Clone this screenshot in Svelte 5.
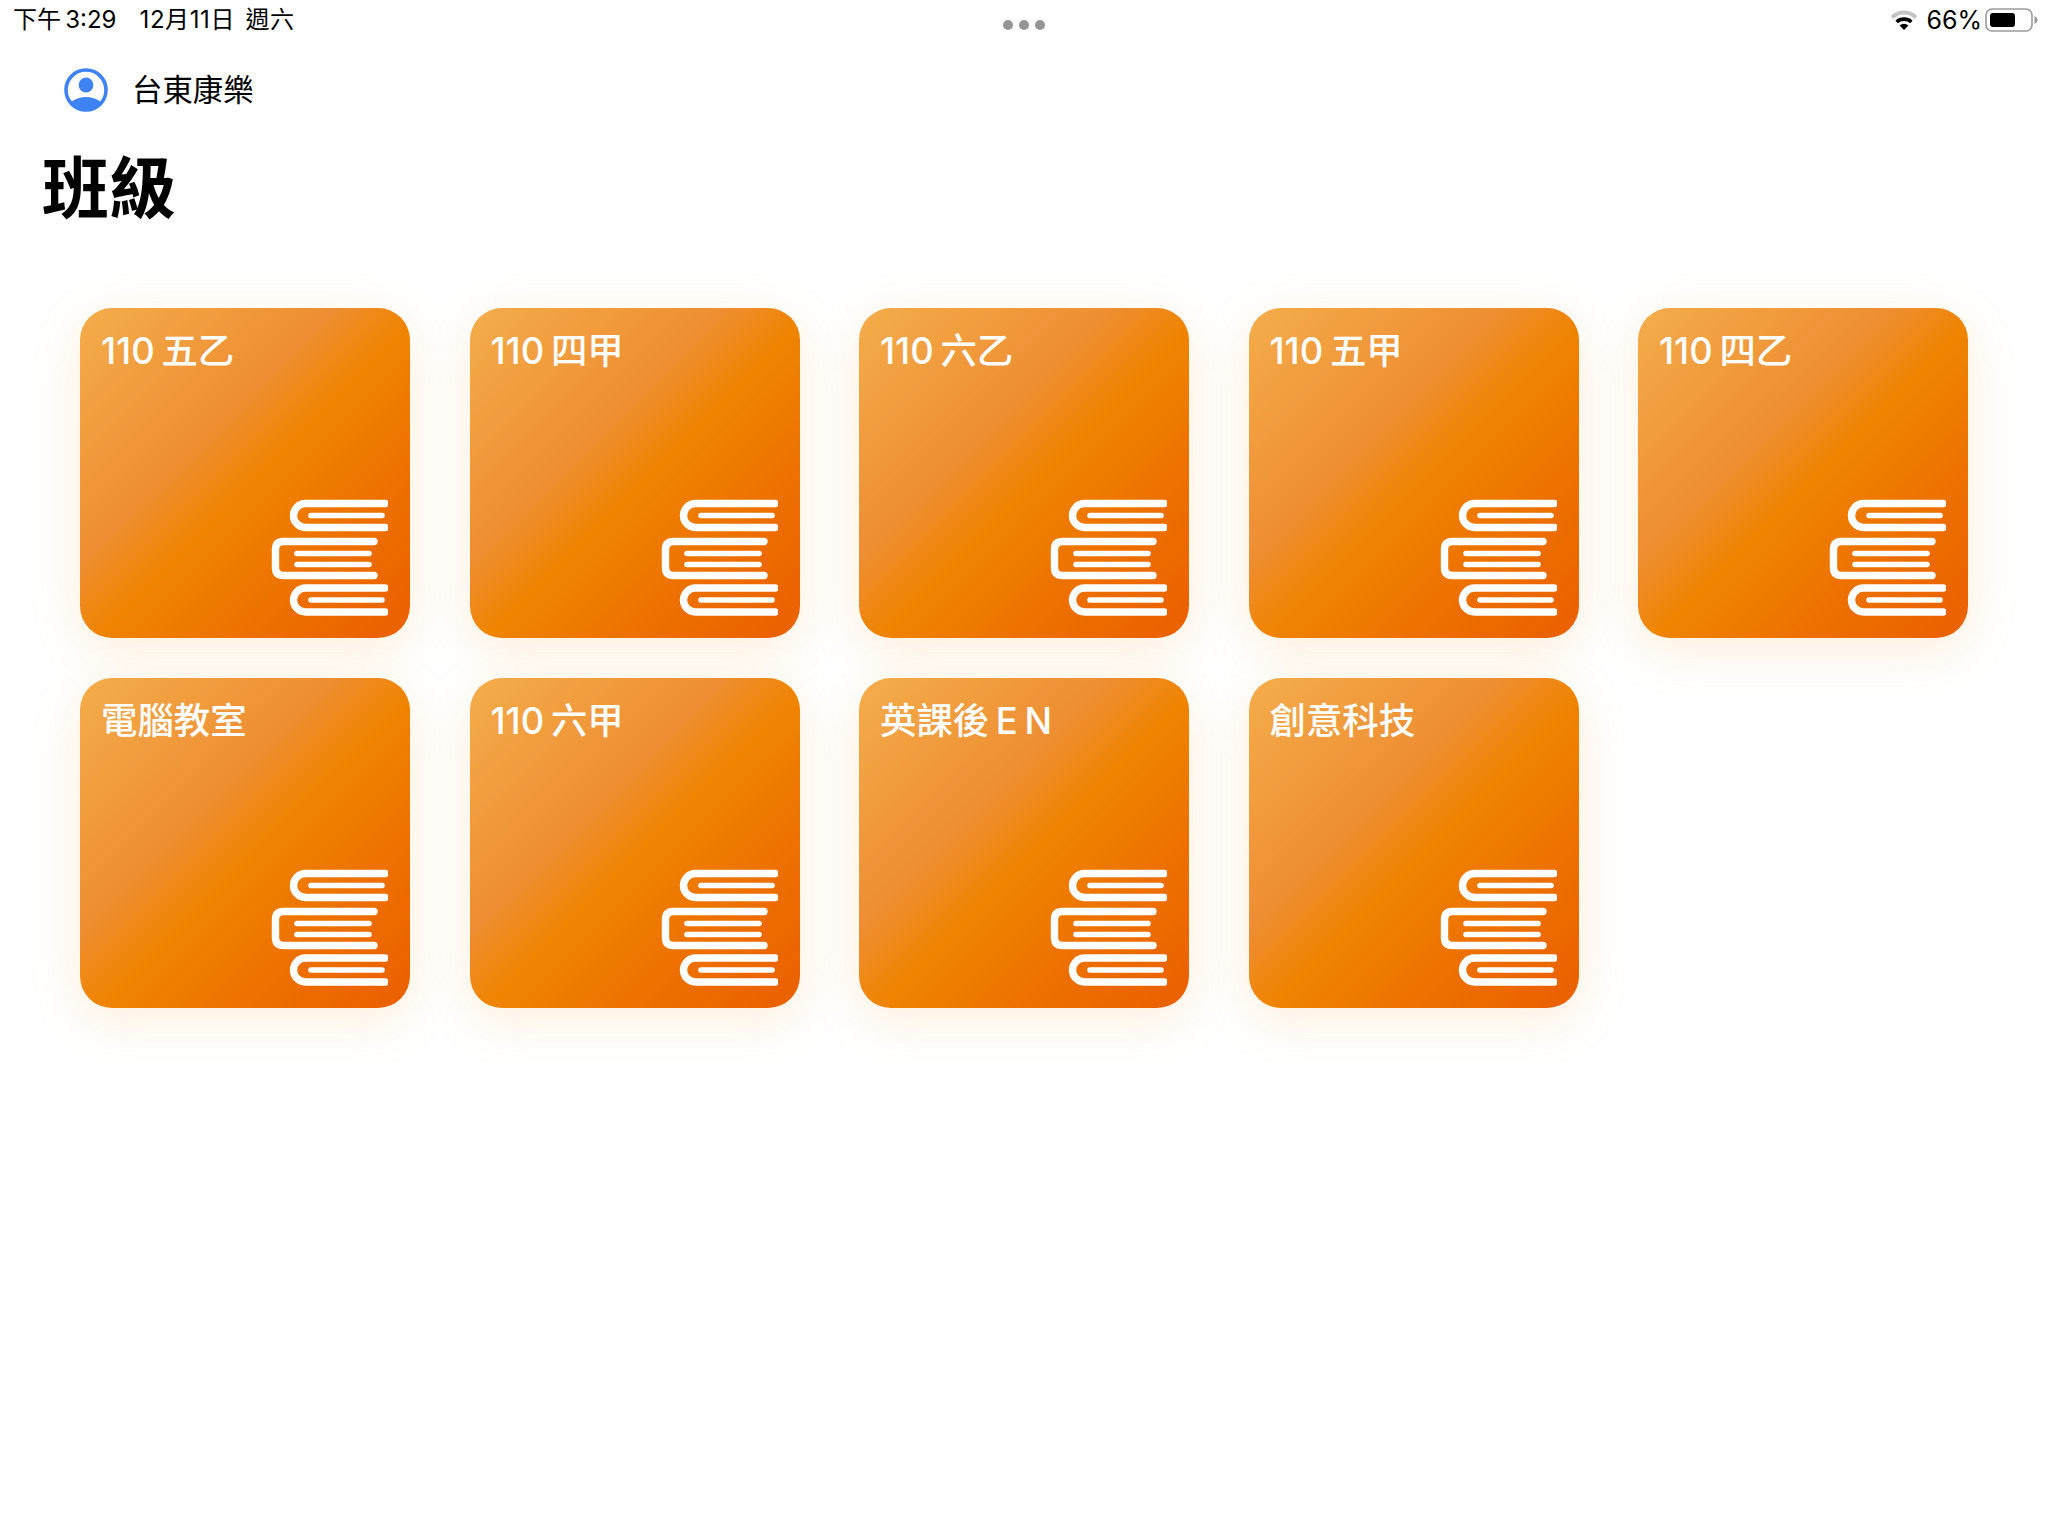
<script>
	const classes = [
		'110 五乙',
		'110 四甲',
		'110 六乙',
		'110 五甲',
		'110 四乙',
		'電腦教室',
		'110 六甲',
		'英課後 E N',
		'創意科技'
	];
</script>

<div class="page">
	<div class="status">
		<div class="time">
			<span class="clock">下午 3:29</span>
			<span class="date">12月11日 週六</span>
		</div>
		<div class="dots"><i></i><i></i><i></i></div>
		<div class="system">
			<svg class="wifi" width="28" height="22" viewBox="0 0 28 22">
				<path d="M2 8.5 A17 17 0 0 1 26 8.5" fill="none" stroke="#c4c4c4" stroke-width="4" />
				<path d="M6.6 13 A11 11 0 0 1 21.4 13" fill="none" stroke="#000" stroke-width="3.6" />
				<path d="M14 21 L9.6 16.4 A6.4 6.4 0 0 1 18.4 16.4 Z" fill="#000" />
			</svg>
			<span class="level">66%</span>
			<svg class="battery" width="53" height="24" viewBox="0 0 53 24">
				<rect x="1" y="1" width="46" height="22" rx="6" fill="none" stroke="#9a9a9a" stroke-width="1.6" />
				<rect x="5" y="5" width="25" height="14" rx="3" fill="#000" />
				<path d="M49.5 8 C51.5 9 52.5 10.5 52.5 12 C52.5 13.5 51.5 15 49.5 16 Z" fill="#9a9a9a" />
			</svg>
		</div>
	</div>

	<div class="account">
		<svg width="44" height="44" viewBox="0 0 44 44">
			<defs>
				<clipPath id="ring"><circle cx="22" cy="22" r="19" /></clipPath>
			</defs>
			<circle cx="22" cy="22" r="20" fill="none" stroke="#3f82f2" stroke-width="3.6" />
			<circle cx="22" cy="17" r="7.4" fill="#3f82f2" />
			<ellipse cx="22" cy="41" rx="18" ry="12" fill="#3f82f2" clip-path="url(#ring)" />
		</svg>
		<span>台東康樂</span>
	</div>

	<h1>班級</h1>

	<div class="grid">
		{#each classes as name}
			<div class="card">
				<div class="name">{name}</div>
				<svg class="books" width="118" height="117" viewBox="0 0 118 117">
					<g fill="none" stroke="#fff" stroke-linecap="round" stroke-linejoin="round">
						<path d="M115 4.5 H35.5 A12 12 0 0 0 35.5 28.5 H115" stroke-width="7.4" />
						<path d="M41 16.5 H112" stroke-width="5.6" />
						<path d="M104 42.5 H13.5 Q5.5 42.5 5.5 50.5 V68.5 Q5.5 76.5 13.5 76.5 H104" stroke-width="7.4" />
						<path d="M27 54.5 H99" stroke-width="5.6" />
						<path d="M27 65.5 H99" stroke-width="5.6" />
						<path d="M115 89 H35.5 A12 12 0 0 0 35.5 113 H115" stroke-width="7.4" />
						<path d="M41 101 H112" stroke-width="5.6" />
					</g>
				</svg>
			</div>
		{/each}
	</div>
</div>

<style>
	:global(body) {
		background: #fff;
	}

	.page {
		width: 2048px;
		height: 1536px;
		overflow: hidden;
		font-family: 'Inter', 'Noto Sans CJK TC', sans-serif;
		color: #000;
	}

	.status {
		display: grid;
		grid-template-columns: 1fr auto 1fr;
		align-items: start;
		height: 40px;
		padding: 4px 10px 0;
		box-sizing: border-box;
		font-size: 24px;
		line-height: 32px;
	}

	.time {
		display: flex;
		gap: 23px;
		padding-left: 3px;
	}

	.clock {
		word-spacing: -2.5px;
	}

	.date {
		letter-spacing: 0.6px;
		word-spacing: 3px;
	}

	.dots {
		display: flex;
		gap: 6px;
		padding-top: 16px;
	}

	.dots i {
		width: 10px;
		height: 10px;
		border-radius: 50%;
		background: #959595;
	}

	.system {
		display: flex;
		justify-content: flex-end;
		align-items: center;
		gap: 8px;
		height: 32px;
	}

	.level {
		font-size: 25px;
		margin-right: -5px;
	}

	.account {
		display: flex;
		align-items: center;
		gap: 24px;
		margin: 28px 0 0 64px;
		font-size: 30.4px;
		line-height: 44px;
	}

	h1 {
		margin: 29px 0 0 42px;
		font-size: 67px;
		line-height: 96px;
		font-weight: 700;
	}

	.grid {
		display: grid;
		grid-template-columns: repeat(5, 330px);
		column-gap: 59.5px;
		row-gap: 40px;
		margin: 71px 0 0 80px;
	}

	.card {
		width: 330px;
		height: 330px;
		box-sizing: border-box;
		padding: 19px 22px 22px 21px;
		border-radius: 32px;
		display: flex;
		flex-direction: column;
		justify-content: space-between;
		color: #fff;
		background: linear-gradient(135deg, #f4ad4a 0%, #ee8e33 38%, #ef8400 53%, #ed7000 75%, #ea5f00 100%);
		box-shadow: 0 12px 50px rgba(245, 160, 50, 0.18);
	}

	.name {
		font-size: 36.4px;
		line-height: 48px;
		font-weight: 500;
		word-spacing: -3px;
	}

	.books {
		align-self: flex-end;
	}
</style>
